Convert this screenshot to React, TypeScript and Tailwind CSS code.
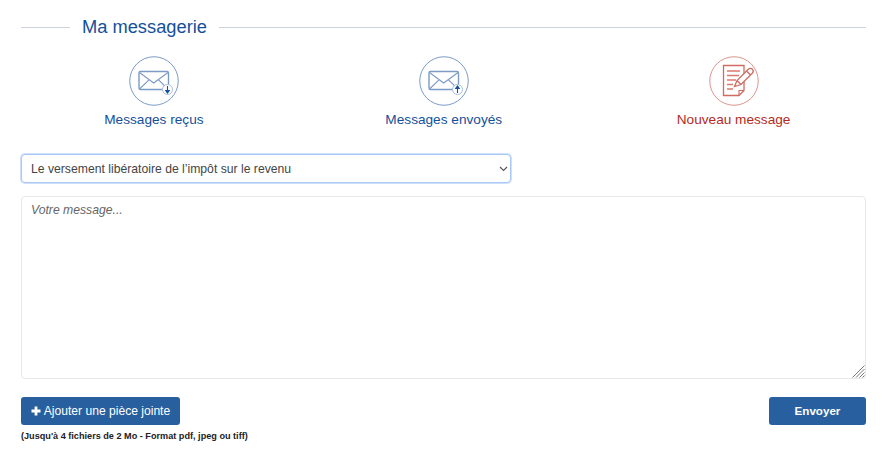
import React from "react";

function Mail({ up }: { up?: boolean }) {
  return (
    <svg width="50" height="50" viewBox="0 0 50 50" fill="none">
      <circle cx="25" cy="25" r="24.25" stroke="#7b9bc5" strokeWidth="1" />
      <rect x="10" y="15.5" width="29.5" height="18" rx="1.5" stroke="#7b9bc5" strokeWidth="1.4" />
      <path d="M10.5 16.5 L24.7 27 L39 16.5 M10.5 33 L20 23.8 M39 33 L29.5 23.8" stroke="#7b9bc5" strokeWidth="1.1" />
      <circle cx="38.5" cy="33.5" r="5" fill="#fff" stroke="#a9bfd9" strokeWidth="1" />
      {up ? (
        <path d="M38.5 37 V31.5 M36.8 32.4 L38.5 30 L40.2 32.4 Z" stroke="#15509b" strokeWidth="1.1" fill="#15509b" />
      ) : (
        <path d="M38.5 30 V35.5 M36.8 34.6 L38.5 37 L40.2 34.6 Z" stroke="#15509b" strokeWidth="1.1" fill="#15509b" />
      )}
    </svg>
  );
}

function Compose() {
  return (
    <svg width="50" height="50" viewBox="0 0 50 50" fill="none">
      <circle cx="25" cy="25" r="24.25" stroke="#dc958c" strokeWidth="1" />
      <path d="M35 19 V9.5 H14.5 V39.5 H30 L35 34.5 V25" stroke="#cf6b60" strokeWidth="1.3" />
      <path d="M30 39.5 V34.5 H35" stroke="#cf6b60" strokeWidth="1.1" />
      <path d="M18 15 H31 M18 19.5 H30 M18 24 H27 M18 28.5 H24 M18 33 H24" stroke="#d9796e" strokeWidth="1.3" />
      <path d="M25.5 30.5 L28 24.5 L39.5 13 Q41.5 11.5 43.5 13.3 Q45 15.3 43.5 17 L32 28.5 Z M37.5 15 L41.5 19 M28 24.5 L32 28.5" stroke="#cf6b60" strokeWidth="1.3" fill="#fff" />
    </svg>
  );
}

function Item({ icon, label, red }: { icon: React.ReactNode; label: string; red?: boolean }) {
  return (
    <a className={`flex flex-col items-center gap-[4px] ${red ? "text-[#b52a1c]" : "text-[#15509b]"}`}>
      {icon}
      <span className="text-[13.65px] leading-[20px]">{label}</span>
    </a>
  );
}

export default function App() {
  return (
    <div className="h-[449px] w-[896px] overflow-hidden bg-white pl-[21px] pt-[16px] font-['Liberation_Sans',Arial,sans-serif]">
      <div className="w-[845px]">
        <div className="flex h-[22px] items-center">
          <div className="h-px w-[49px] bg-[#cdd3dc]" />
          <h1 className="px-[12px] text-[18.3px] leading-[22px] font-normal text-[#15509b]">Ma messagerie</h1>
          <div className="h-px flex-1 bg-[#cdd3dc]" />
        </div>
        <div className="-ml-[12px] mt-[18px] grid w-[869.5px] grid-cols-3">
          <Item icon={<Mail />} label="Messages reçus" />
          <Item icon={<Mail up />} label="Messages envoyés" />
          <Item icon={<Compose />} label="Nouveau message" red />
        </div>
        <div className="relative mt-[24px] h-[29px] w-[490px]">
          <select
            defaultValue="a"
            className="block h-[29px] w-full appearance-none rounded-[4px] border border-[#a9c8f5] bg-white pl-[9px] pt-[1px] text-[12.2px] text-[#444] shadow-[0_0_0_1px_#cfe0fb] outline-none"
          >
            <option value="a">Le versement libératoire de l’impôt sur le revenu</option>
          </select>
          <svg className="pointer-events-none absolute right-[3px] top-[12px]" width="9" height="6" viewBox="0 0 9 6" fill="none">
            <path d="M1 1 L4.5 4.5 L8 1" stroke="#555" strokeWidth="1.1" />
          </svg>
        </div>
        <div className="relative mt-[13px] h-[183px]">
          <textarea
            placeholder="Votre message..."
            className="block h-[183px] w-full resize-none rounded-[4px] border border-[#e8e8e8] px-[9px] py-[5px] text-[12.2px] leading-[17px] outline-none placeholder:text-[#666] placeholder:italic"
          />
          <svg className="pointer-events-none absolute right-[1px] bottom-[1px]" width="13" height="13" viewBox="0 0 13 13" fill="none">
            <path d="M0.5 12.5 L12.5 0.5 M4 12.5 L12.5 4 M7.5 12.5 L12.5 7.5 M10.5 12.5 L12.5 10.5" stroke="#777" strokeWidth="1" />
          </svg>
        </div>
        <div className="mt-[18px] flex items-start justify-between">
          <div>
            <button className="flex h-[28px] w-[159px] items-center justify-center gap-[3px] rounded-[3px] bg-[#28609f] text-[12.1px] font-normal text-white">
              <svg width="10" height="10" viewBox="0 0 10 10"><path d="M3.6 0.5 H6.4 V3.6 H9.5 V6.4 H6.4 V9.5 H3.6 V6.4 H0.5 V3.6 H3.6 Z" fill="#fff" /></svg>
              Ajouter une pièce jointe
            </button>
            <p className="mt-[6px] text-[9.15px] leading-[11px] font-bold text-[#222]">(Jusqu'à 4 fichiers de 2 Mo - Format pdf, jpeg ou tiff)</p>
          </div>
          <button className="h-[28px] w-[97px] rounded-[3px] bg-[#28609f] text-[11.6px] font-bold text-white">Envoyer</button>
        </div>
      </div>
    </div>
  );
}
